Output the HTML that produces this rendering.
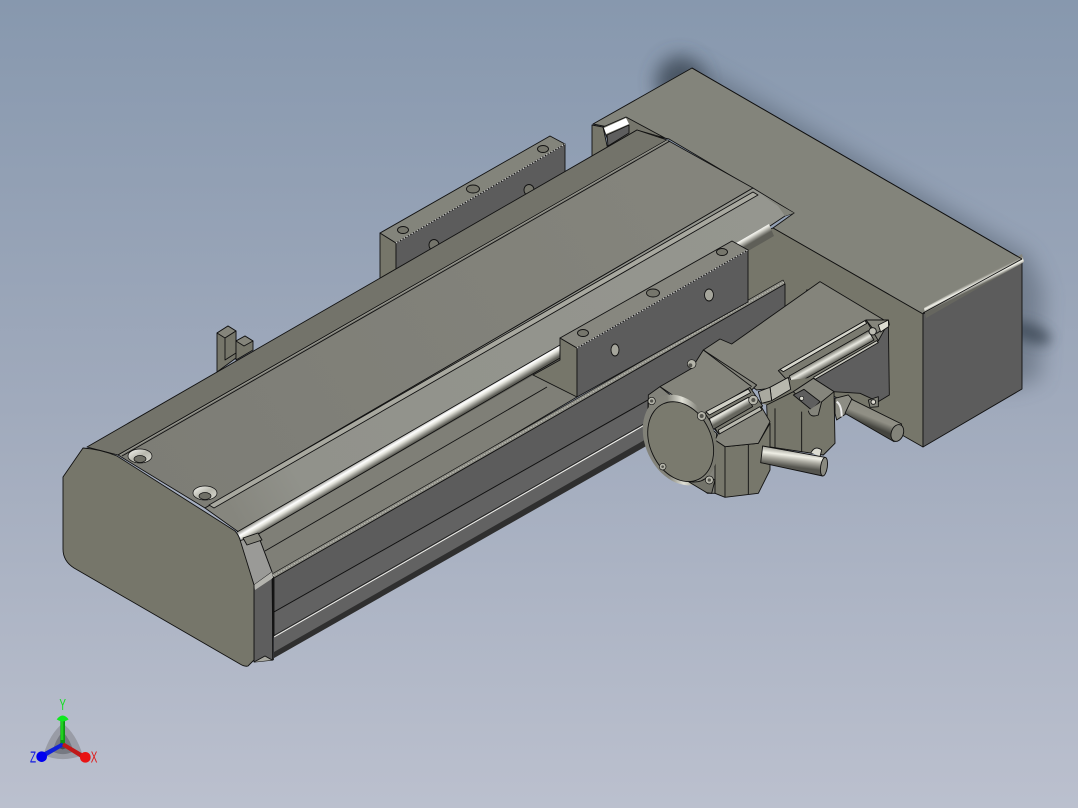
<!DOCTYPE html>
<html><head><meta charset="utf-8"><style>html,body{margin:0;padding:0;background:#a0a9bb}svg{display:block}</style></head><body>
<svg width="1078" height="808" viewBox="0 0 1078 808" xmlns="http://www.w3.org/2000/svg" stroke-linejoin="round">
<defs>
<linearGradient id="bg" x1="0" y1="0" x2="0" y2="1"><stop offset="0" stop-color="#8798ae"/><stop offset=".5" stop-color="#a0aabc"/><stop offset="1" stop-color="#bbc0ce"/></linearGradient>
<filter id="b1" x="-50%" y="-50%" width="200%" height="200%"><feGaussianBlur stdDeviation="11"/></filter>
<filter id="b2" x="-80%" y="-80%" width="260%" height="260%"><feGaussianBlur stdDeviation="9"/></filter>
<filter id="b3" x="-80%" y="-80%" width="260%" height="260%"><feGaussianBlur stdDeviation="6"/></filter>
<linearGradient id="rod" gradientUnits="userSpaceOnUse" x1="237" y1="532" x2="243.5" y2="543"><stop offset="0" stop-color="#8a8a82"/><stop offset=".35" stop-color="#fff"/><stop offset=".55" stop-color="#e2e2da"/><stop offset="1" stop-color="#5f5f58"/></linearGradient>
<linearGradient id="cen" gradientUnits="userSpaceOnUse" x1="140" y1="470" x2="660" y2="160"><stop offset="0" stop-color="#7d7d76"/><stop offset="1" stop-color="#84847c"/></linearGradient>
<linearGradient id="strip" gradientUnits="userSpaceOnUse" x1="230" y1="510" x2="780" y2="210"><stop offset="0" stop-color="#86867e"/><stop offset=".12" stop-color="#91928b"/><stop offset="1" stop-color="#95968f"/></linearGradient>
<linearGradient id="edge" gradientUnits="userSpaceOnUse" x1="970" y1="283" x2="973" y2="289"><stop offset="0" stop-color="#85857c"/><stop offset=".5" stop-color="#f4f4ec"/><stop offset="1" stop-color="#66665f"/></linearGradient>
<linearGradient id="csk" x1="0" y1="0" x2="1" y2="1"><stop offset="0" stop-color="#f8f8f4"/><stop offset=".5" stop-color="#b8b8ae"/><stop offset="1" stop-color="#dcdcd4"/></linearGradient>
<linearGradient id="cab1" gradientUnits="userSpaceOnUse" x1="520" y1="535" x2="513" y2="590"><stop offset="0" stop-color="#8e8e86"/><stop offset=".4" stop-color="#efefe6"/><stop offset=".65" stop-color="#aaa9a0"/><stop offset="1" stop-color="#55554f"/></linearGradient>
<linearGradient id="cab2" gradientUnits="userSpaceOnUse" x1="765" y1="415" x2="745" y2="465"><stop offset="0" stop-color="#8e8e84"/><stop offset=".55" stop-color="#908f85"/><stop offset=".85" stop-color="#5f5f58"/><stop offset="1" stop-color="#45453f"/></linearGradient>
<linearGradient id="rod2" gradientUnits="userSpaceOnUse" x1="630" y1="248" x2="645" y2="275"><stop offset="0" stop-color="#77776e"/><stop offset=".45" stop-color="#e8e8e0"/><stop offset="1" stop-color="#66665e"/></linearGradient>
<linearGradient id="rod3" gradientUnits="userSpaceOnUse" x1="320" y1="408" x2="335" y2="434"><stop offset="0" stop-color="#77776e"/><stop offset=".45" stop-color="#e8e8e0"/><stop offset="1" stop-color="#66665e"/></linearGradient>
<linearGradient id="flange" x1="0" y1="0" x2="1" y2=".6"><stop offset="0" stop-color="#7f7f76"/><stop offset=".45" stop-color="#85857c"/><stop offset=".62" stop-color="#e0e0d6"/><stop offset=".8" stop-color="#85857c"/><stop offset="1" stop-color="#76766c"/></linearGradient>
</defs>
<rect width="1078" height="808" fill="url(#bg)"/>

<!-- cast shadow -->
<g fill="#3d4856">
<polygon points="692,62 1028,255 1044,290 1040,380 1000,390 980,300 690,90" filter="url(#b1)" opacity=".42"/>
<ellipse cx="680" cy="82" rx="24" ry="26" filter="url(#b2)" opacity=".85"/>
<ellipse cx="1030" cy="333" rx="22" ry="9" transform="rotate(20 1030 333)" filter="url(#b3)" opacity=".8"/>
</g>

<!-- big back block -->
<g stroke="#111" stroke-width=".9">
<polygon points="692,68 1022,259 923,314 773,228 794,213 669,139 593,124" fill="#83847b"/>
<polygon points="773,228 923,314 923,447 830,394 740,345 745,240" fill="#76766a"/>
<polygon points="923,314 1022,259 1022,389 923,447" fill="#5c5c5c"/>
<polygon points="924,308 1022,254 1024,262 926,318" fill="url(#edge)" stroke="none"/>
<path d="M923,313 L1022,259 M692,68 L1022,259" fill="none"/>
</g>

<!-- rear tab -->
<g stroke="#111" stroke-width=".9">
<polygon points="592,125 603,127 608,150 592,160" fill="#76766a"/>
<polygon points="603,127 626,117 665,138 637,130 610,146" fill="#76766c"/>
<polygon points="607,135 629,125 629,133 608,146" fill="#5e5e5e"/>
<polygon points="604,128 626,118 629,124 606,134" fill="#fff" stroke="none"/>
</g>

<!-- rear carriage block -->
<g stroke="#111" stroke-width=".9">
<polygon points="380,233 396,243 396,275 380,285" fill="#76766a"/>
<polygon points="396,243 565,144 565,175 396,275" fill="#5c5c5c"/>
<polygon points="380,233 550,136 565,144 396,243" fill="#83847b"/>
<path d="M396,243 L565,144" stroke="#ddd" stroke-width=".9" stroke-dasharray="1.5 1.5"/>
<g fill="#75756b">
<ellipse cx="403" cy="230" rx="5.5" ry="3.5"/><ellipse cx="473" cy="189" rx="6.5" ry="4"/><ellipse cx="543" cy="149" rx="5.5" ry="3.5"/>
<ellipse cx="434" cy="245" rx="5" ry="5.5"/><ellipse cx="529" cy="190" rx="5" ry="5.5"/>
</g>
</g>

<!-- small left bracket -->
<g stroke="#111" stroke-width=".9">
<polygon points="217,333 228,326 236,331 236,358 217,372" fill="#76766a"/>
<polygon points="217,333 228,326 236,331 225,338" fill="#85857b"/>
<polygon points="225,338 236,331 236,353 225,360" fill="#76766a"/>
<polygon points="236,341 245,336 253,341 253,350 236,360" fill="#76766a"/>
<polygon points="236,341 245,336 253,341 244,346" fill="#85857b"/>
</g>

<!-- main body top surfaces -->
<g stroke="#111" stroke-width=".9">
<polygon points="87,447 637,130 667,140 118,455" fill="#73736a"/>
<polygon points="118,455 667,140 753,188 205,508" fill="url(#cen)"/>
<polygon points="205,508 753,188 794,213 785,216 767,228 240,533" fill="url(#strip)"/>
<path d="M122,456 L670,141" fill="none"/>
<path d="M120,455 L668,140" stroke="#a5a59c" stroke-width=".7" fill="none"/>
<polygon points="209,505 753,192 758,195 214,508" fill="#a8a89f"/>
<polygon points="762,195 794,213 785,216 778,206" fill="#83847b" stroke="none"/>
<polygon points="240,533 560,350 577,397 273,578" fill="#7f7f77"/>
<path d="M265,551 L547,387" fill="none"/>
<polygon points="533,375 560,360 577,375 577,397" fill="#7f7f77" stroke="none"/>
<!-- rod -->
<polygon points="237,532 769,224 774,236 243,543" fill="url(#rod)" stroke="none"/>
<path d="M237,532 L560,345 M243,543 L560,358" fill="none"/>
<!-- rail stripe -->
<polygon points="272,574 783,280 785,284 274,578" fill="#8d8d85" stroke-width=".7"/>
<path d="M273,576 L784,282" stroke="#c8c8c0" stroke-width=".8" stroke-dasharray="1.5 1.5" fill="none"/>
<!-- side faces -->
<polygon points="274,578 785,284 785,313 648,400 274,612" fill="#5c5c5c"/>
<polygon points="274,612 648,400 648,423 274,637" fill="#626262"/>
<polygon points="274,637 648,423 648,445 274,658" fill="#626262" stroke="none"/>
<polygon points="274,652 648,438 648,445 274,658" fill="#2f2f2f" stroke="none"/>
<path d="M274,637 L648,423" stroke="#f4f4f0" stroke-width="1" fill="none"/>
<path d="M274,635.5 L648,421.5" stroke="#111" stroke-width=".7" fill="none"/>
</g>

<!-- front carriage block -->
<g stroke="#111" stroke-width=".9">
<polygon points="560,338 577,348 577,397 533,375 560,360" fill="#76766a"/>
<polygon points="560,338 732,241 748,250 577,348" fill="#87877f"/>
<polygon points="577,348 748,250 748,302 577,397" fill="#5c5c5c"/>
<path d="M577,348 L748,250" stroke="#ddd" stroke-dasharray="1.5 1.5" fill="none"/>
<g fill="#76766c">
<ellipse cx="583" cy="333" rx="5.5" ry="3.5"/><ellipse cx="653" cy="293" rx="6.5" ry="4"/><ellipse cx="722" cy="252" rx="5.5" ry="3.5"/>
</g>
<g fill="#a5a59b"><ellipse cx="615" cy="350" rx="4" ry="6"/><ellipse cx="709" cy="295" rx="4.5" ry="6"/></g>
</g>

<!-- end cap -->
<g stroke="#111" stroke-width=".9">
<polygon points="258,535 272,572 273,660 254,662 254,585 239,541" fill="#5e5e5e"/>
<polygon points="239,541 258,535 272,572 254,585" fill="#9a9a97"/>
<polygon points="254,585 272,572 273,578 255,590" fill="#b4b4ae" stroke="none"/>
<polygon points="243,538 258,533 262,540 247,545" fill="#85857c"/>
<path d="M254,662 L265,656 L272,660" fill="#a8a8a0"/>
<path d="M273,578 V660" stroke-width="1.6" fill="none"/>
<path d="M83,448 Q100,449 117,456 L235,531 Q239,535 241,543 L254,585 L254,660 L248,666 Q245,667 240,664 L74,568 Q63,561 63,549 L63,477 Z" fill="#76766a"/>
</g>
<g stroke="#111" stroke-width=".7">
<ellipse cx="140" cy="456" rx="12" ry="7" fill="url(#csk)"/>
<ellipse cx="140" cy="459" rx="6" ry="3.5" fill="#6f6f66"/>
<ellipse cx="205" cy="493" rx="12" ry="7" fill="url(#csk)"/>
<ellipse cx="205" cy="496" rx="6" ry="3.5" fill="#6f6f66"/>
</g>

<!-- motors in zoomed coordinates -->
<g transform="translate(620,270) scale(.33333)" stroke="#111" stroke-width="2.7">
<!-- mount corners -->
<polygon points="560,60 598,68 565,92" fill="#83847b"/>
<polygon points="568,70 582,72 572,84" fill="#dedcd2"/>
<!-- far cable elbow -->
<polygon points="645,385 685,375 700,392 680,430 650,450 645,430" fill="#8d8d84"/>
<path d="M650,395 Q665,405 665,440" stroke="#eee" stroke-width="6" fill="none"/>
<polygon points="695,388 845,462 822,515 675,430" fill="url(#cab2)"/>
<ellipse cx="832" cy="489" rx="18" ry="26" transform="rotate(20 832 489)" fill="#83837a"/>
<!-- long motor body -->
<polygon points="580,325 775,212 805,155 808,375 775,395 720,370 640,365" fill="#5e5e5e"/>
<polygon points="745,390 775,380 775,410 750,412" fill="#83847b"/>
<circle cx="760" cy="396" r="7" fill="#dedcd2"/>
<polygon points="250,240 300,207 335,222 600,35 805,158 775,212 585,325 510,322 450,355 410,360" fill="#84847b"/>
<polygon points="475,302 738,150 775,212 585,325 510,340" fill="#7a7a70"/>
<polygon points="480,298 735,152 740,160 490,305" fill="#d6d6cc"/>
<polygon points="508,318 745,182 762,210 518,348" fill="url(#rod2)"/>
<polygon points="580,322 770,212 775,218 585,328" fill="#c8c8be"/>
<polygon points="738,150 805,150 808,165 770,190" fill="#85857c"/>
<polygon points="775,165 805,150 806,170 782,186" fill="#dcdcd2"/>
<circle cx="758" cy="184" r="11" fill="#bdbdb3"/>
<!-- gap filler -->
<polygon points="415,365 510,330 585,322 520,365 440,405 425,400" fill="#76766a" stroke="none"/>
<!-- coupling -->
<polygon points="450,352 505,322 512,358 455,392" fill="#b8b8ae"/>
<polygon points="415,365 450,352 455,392 425,400" fill="#a9a99f"/>
<!-- far connector -->
<polygon points="440,405 520,365 580,325 642,365 645,520 610,555 545,545 445,530" fill="#76766a"/>
<polygon points="520,365 580,325 642,365 575,420" fill="#85857c"/>
<polygon points="520,375 552,358 600,395 575,420" fill="#5e5e5e"/>
<path d="M565,422 Q570,445 595,435 L605,395" fill="#84847b"/>
<circle cx="545" cy="385" r="6" fill="#dcdcd2" stroke-width="2"/>
<path d="M465,415 V535 M545,425 V545" fill="none"/>
<path d="M573,548 Q585,525 605,540 L600,560" fill="#dcdcd2"/>
<!-- flange -->
<polygon points="85,375 120,350 290,490 285,670 262,670 85,530" fill="#82827a"/>
<polygon points="120,350 215,295 250,240 410,345 395,360 295,490 240,430" fill="#84847b"/>
<path d="M250,240 L395,350" fill="none"/>
<!-- near connector -->
<polygon points="285,510 315,530 415,520 450,460 450,600 415,670 315,682 285,670" fill="#77776b"/>
<polygon points="285,510 295,490 425,412 450,455 415,520 315,530" fill="#84847b"/>
<path d="M315,530 V682 M385,525 V672" fill="none"/>
<!-- near grooves and rod -->
<polygon points="255,430 390,352 428,408 295,490" fill="#7a7a70"/>
<polygon points="258,425 385,357 392,368 268,435" fill="#d0d0c6"/>
<polygon points="268,446 385,382 398,410 280,478" fill="url(#rod3)"/>
<polygon points="295,480 420,410 426,420 298,492" fill="#b8b8ae"/>
<!-- disk -->
<ellipse cx="180" cy="510" rx="104" ry="142" transform="rotate(-25 180 510)" fill="url(#flange)" stroke="none"/>
<ellipse cx="182" cy="515" rx="92" ry="125" transform="rotate(-25 182 515)" fill="#7a7a6e"/>
<path d="M205,635 Q245,640 262,620 L285,630 L275,670 L260,668 Z" fill="#73736a"/>
<!-- screws -->
<g fill="#b5b5aa" stroke-width="2">
<circle cx="95" cy="393" r="11"/><circle cx="128" cy="590" r="10"/><circle cx="245" cy="438" r="13"/><circle cx="400" cy="390" r="14"/><circle cx="215" cy="282" r="13"/><circle cx="268" cy="630" r="12"/>
</g>
<g fill="#55554f" stroke="none">
<circle cx="95" cy="393" r="5"/><circle cx="128" cy="590" r="4"/><circle cx="245" cy="438" r="6"/><circle cx="400" cy="390" r="6"/><circle cx="211" cy="286" r="6"/><circle cx="268" cy="630" r="5"/>
</g>
<!-- near cable -->
<polygon points="428,528 615,562 608,618 422,578" fill="url(#cab1)"/>
<ellipse cx="612" cy="590" rx="10" ry="28" transform="rotate(8 612 590)" fill="#8a8a80"/>
</g>

<!-- triad -->
<g transform="translate(20,690) scale(.33333)">
<path d="M128,100 Q168,130 188,195 Q128,220 70,195 Q90,130 128,100Z" fill="#8f9299" opacity=".75"/>
<path d="M128,125 Q152,150 160,185 Q128,200 98,185 Q105,150 128,125Z" fill="#6b6e75" opacity=".75"/>
<path d="M128,150 L145,172 L128,178 L110,172Z" fill="#3f4147" opacity=".8"/>
<polygon points="121,92 135,92 135,163 128,170 121,163" fill="#0b9a12"/>
<polygon points="122,92 130,92 130,150 122,150" fill="#20d020"/>
<path d="M110,88 Q128,65 146,88 Q128,100 110,88Z" fill="#10e820"/>
<polygon points="126,158 132,168 70,204 62,192" fill="#1020d8"/>
<ellipse cx="65" cy="200" rx="16" ry="16" fill="#0000f0"/>
<polygon points="126,168 132,158 195,195 188,207" fill="#c01818"/>
<ellipse cx="196" cy="202" rx="16" ry="16" fill="#e81414"/>
</g>
<g font-family="'Liberation Sans',sans-serif" font-size="16" text-anchor="middle">
<text transform="translate(62.7,710) scale(.62,1)" fill="#12e020">Y</text>
<text transform="translate(33,762.5) scale(.62,1)" fill="#1018e0">Z</text>
<text transform="translate(94,762.5) scale(.62,1)" fill="#e01818">X</text>
</g>
</svg>
</body></html>
